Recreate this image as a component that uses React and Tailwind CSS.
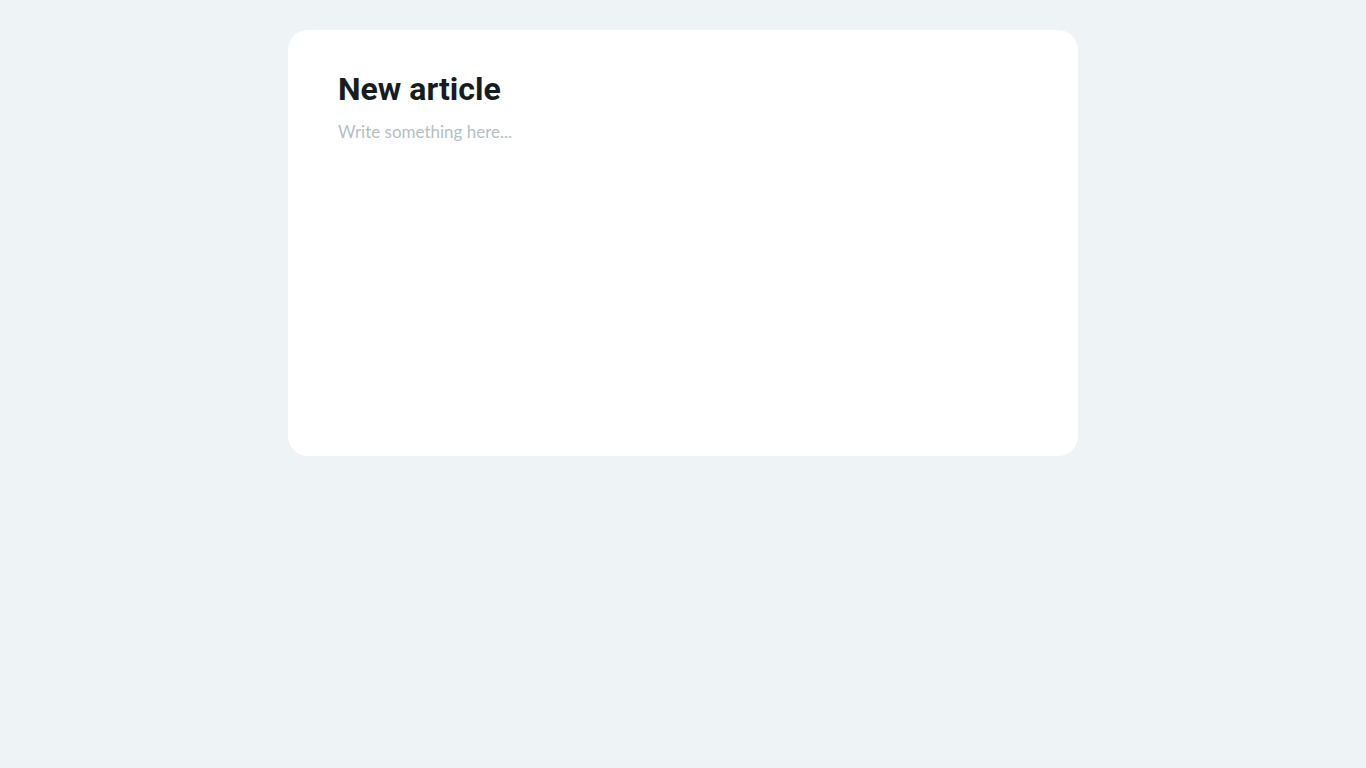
export default function App() {
  return (
    <div className="min-h-screen bg-[#eef3f6] pt-[30px]">
      <div className="mx-auto flex h-[426px] w-[790px] flex-col rounded-[20px] bg-white px-[50px] pt-[40px] pb-[40px]">
        <h1 className="font-['Roboto',sans-serif] text-[32px] font-bold leading-[1.2] text-[#161d22]">
          New article
        </h1>
        <textarea
          placeholder="Write something here..."
          className="mt-[11px] flex-1 resize-none bg-transparent font-['Lato',sans-serif] text-[17px] leading-[1.5] text-[#161d22] placeholder:text-[#b4bfc5] outline-none"
        />
      </div>
    </div>
  );
}
